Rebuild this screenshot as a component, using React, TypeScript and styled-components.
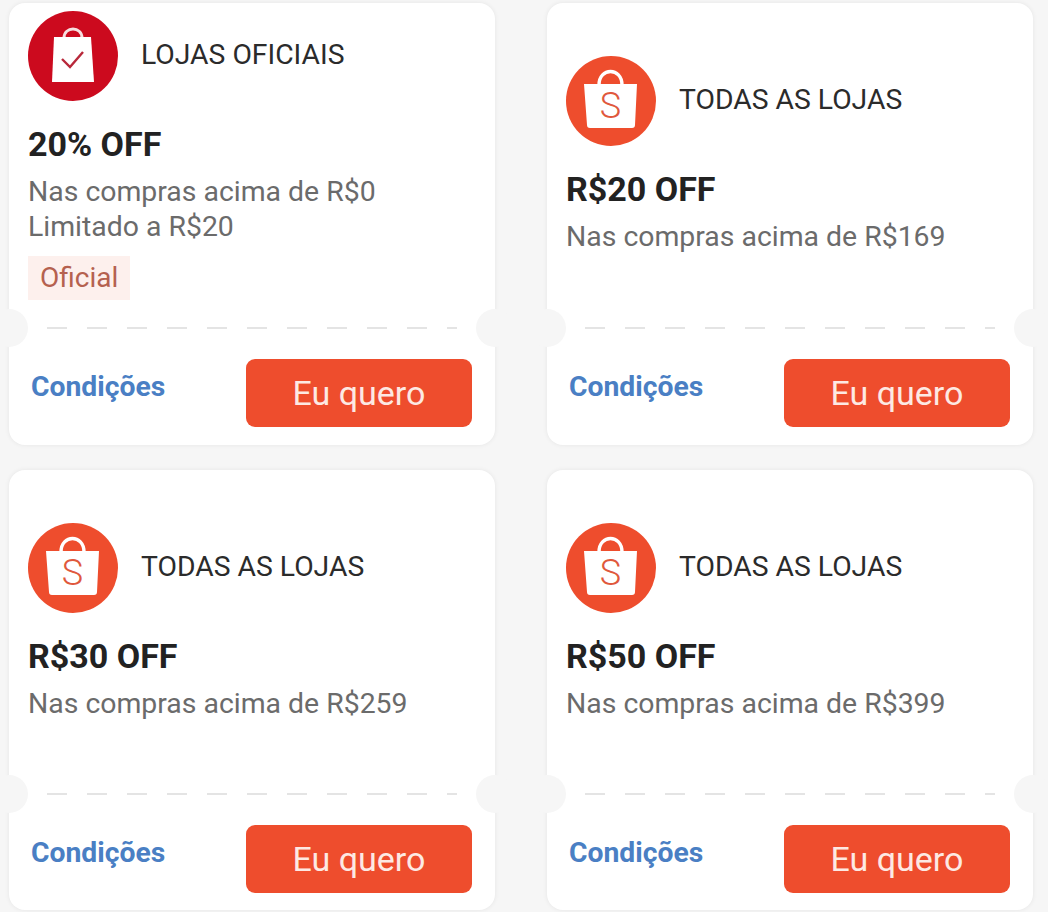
import React, { FC } from "react";
import styled, { createGlobalStyle } from "styled-components";

type Coupon = {
  id: string;
  scope: string;
  title: string;
  lines: string[];
  official?: boolean;
  bodyHeight: number;
};

const coupons: Coupon[] = [
  {
    id: "oficial-20",
    scope: "LOJAS OFICIAIS",
    title: "20% OFF",
    lines: ["Nas compras acima de R$0", "Limitado a R$20"],
    official: true,
    bodyHeight: 324,
  },
  { id: "todas-20", scope: "TODAS AS LOJAS", title: "R$20 OFF", lines: ["Nas compras acima de R$169"], bodyHeight: 324 },
  { id: "todas-30", scope: "TODAS AS LOJAS", title: "R$30 OFF", lines: ["Nas compras acima de R$259"], bodyHeight: 323 },
  { id: "todas-50", scope: "TODAS AS LOJAS", title: "R$50 OFF", lines: ["Nas compras acima de R$399"], bodyHeight: 323 },
];

const OfficialLogo: FC = () => (
  <svg width="90" height="90" viewBox="0 0 90 90">
    <circle cx="45" cy="45" r="45" fill="#cc0a1e" />
    <path d="M36 27c0-12 18-12 18 0" fill="none" stroke="#f6dfe0" strokeWidth="3" />
    <path d="M26 26h37l3 45H24z" fill="#fff" />
    <path d="M34 48l8 8 13-15" fill="none" stroke="#b8283a" strokeWidth="2.4" />
  </svg>
);

const ShopLogo: FC = () => (
  <svg width="90" height="90" viewBox="0 0 90 90">
    <circle cx="45" cy="45" r="45" fill="#ee4d2d" />
    <path d="M33 29c0-18 23-18 23 0" fill="none" stroke="#fff" strokeWidth="3.4" />
    <path d="M18 28h53l-2 41a3 3 0 0 1-3 3H24a3 3 0 0 1-3-3z" fill="#fff" />
    <text x="44.5" y="62" textAnchor="middle" fontFamily="Roboto, sans-serif" fontWeight="300" fontSize="36" fill="#e0583c">
      S
    </text>
  </svg>
);

const App: FC = () => (
  <>
    <GlobalStyle />
    <Grid>
      {coupons.map((coupon) => (
        <Card key={coupon.id}>
          <Body $official={coupon.official} $height={coupon.bodyHeight}>
            <Header>
              {coupon.official ? <OfficialLogo /> : <ShopLogo />}
              <Scope>{coupon.scope}</Scope>
            </Header>
            <Title>{coupon.title}</Title>
            {coupon.lines.map((line) => (
              <Description key={line}>{line}</Description>
            ))}
            {coupon.official && <Badge>Oficial</Badge>}
          </Body>
          <Divider />
          <Footer>
            <Conditions>Condições</Conditions>
            <ClaimButton>Eu quero</ClaimButton>
          </Footer>
        </Card>
      ))}
    </Grid>
  </>
);

const GlobalStyle = createGlobalStyle`
  html, body {
    margin: 0;
    background: #f6f6f6;
    font-family: Roboto, "Liberation Sans", sans-serif;
  }
`;

const Grid = styled.div`
  display: grid;
  grid-template-columns: 486px 486px;
  grid-template-rows: 442px 440px;
  column-gap: 52px;
  row-gap: 25px;
  padding: 3px 15px 2px 9px;
  width: 1048px;
  height: 912px;
  box-sizing: border-box;
  overflow: hidden;
`;

const Card = styled.section`
  display: flex;
  flex-direction: column;
  background: #fff;
  border-radius: 16px;
  box-shadow: 0 0 5px rgba(0, 0, 0, 0.07);
`;

const Body = styled.div<{ $official?: boolean; $height: number }>`
  height: ${({ $height }) => $height}px;
  box-sizing: border-box;
  padding: ${({ $official }) => ($official ? "8px" : "53px")} 19px 0;
`;

const Header = styled.div`
  display: flex;
  align-items: center;
  gap: 23px;
  margin-bottom: 24px;

  svg {
    flex-shrink: 0;
    display: block;
  }
`;

const Scope = styled.span`
  padding-bottom: 3px;
  font-size: 28.3px;
  color: #2b2b2b;
`;

const Title = styled.h2`
  margin: 0 0 11px;
  font-size: 34px;
  line-height: 38px;
  font-weight: 700;
  color: #222;
`;

const Description = styled.p`
  margin: 0;
  font-size: 28.4px;
  line-height: 35px;
  color: #6b6b6b;
`;

const Badge = styled.span`
  display: inline-block;
  margin-top: 12px;
  padding: 0 12px;
  font-size: 28px;
  line-height: 44px;
  color: #b5614f;
  background: #fdf0ed;
`;

/* dashed tear line; the round ticket notches hang off its two ends */
const Divider = styled.div`
  position: relative;
  margin: 0 38px;
  height: 2px;
  background: repeating-linear-gradient(to right, #e4e4e4 0 20px, transparent 20px 40px);

  &::before,
  &::after {
    content: "";
    position: absolute;
    top: -18px;
    width: 38px;
    height: 38px;
    border-radius: 50%;
    background: #f6f6f6;
  }

  &::before {
    left: -57px;
  }

  &::after {
    right: -57px;
  }
`;

const Footer = styled.div`
  flex: 1;
  display: flex;
  align-items: flex-start;
  justify-content: space-between;
  padding: 30px 23px 0 22px;
`;

const Conditions = styled.a`
  margin-top: 12px;
  font-size: 28.3px;
  line-height: 32px;
  font-weight: 700;
  color: #4a7fc4;
`;

const ClaimButton = styled.button`
  width: 226px;
  height: 68px;
  border: 0;
  border-radius: 9px;
  background: #ee4d2d;
  color: #fde9e3;
  font-family: inherit;
  font-size: 34px;
`;

export default App;
